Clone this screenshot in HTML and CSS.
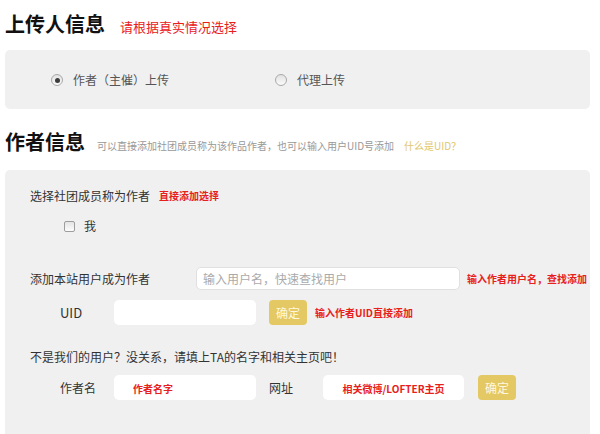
FILE: index.html
```html
<!DOCTYPE html>
<html lang="zh-CN">
<head>
<meta charset="utf-8">
<title>上传人信息</title>
<link rel="stylesheet" href="styles.css">
</head>
<body>
<div class="page">
  <div class="head head-first">
    <h2 class="title">上传人信息</h2>
    <span class="hint-red">请根据真实情况选择</span>
  </div>
  <div class="panel panel-radio">
    <label class="opt"><span class="radio checked"></span><span>作者（主催）上传</span></label>
    <label class="opt"><span class="radio"></span><span>代理上传</span></label>
  </div>

  <div class="head head-second">
    <h2 class="title">作者信息</h2>
    <span class="sub">可以直接添加社团成员称为该作品作者，也可以输入用户UID号添加</span>
    <span class="link">什么是UID？</span>
  </div>
  <div class="panel panel-author">
    <div class="row row-members">
      <span class="label">选择社团成员称为作者</span>
      <span class="note">直接添加选择</span>
    </div>
    <div class="row row-me">
      <span class="check"></span><span class="label">我</span>
    </div>
    <div class="row row-search">
      <span class="label label-wide">添加本站用户成为作者</span>
      <input class="field field-search" type="text" placeholder="输入用户名，快速查找用户">
      <span class="note note-search">输入作者用户名，查找添加</span>
    </div>
    <div class="row row-uid indent">
      <span class="label label-short label-uid">UID</span>
      <input class="field field-mid" type="text">
      <span class="btn">确定</span>
      <span class="note note-uid">输入作者UID直接添加</span>
    </div>
    <div class="row row-not">
      <span class="label">不是我们的用户？没关系，请填上TA的名字和相关主页吧！</span>
    </div>
    <div class="row row-name indent">
      <span class="label label-short">作者名</span>
      <input class="field field-mid field-red" type="text" placeholder="作者名字">
      <span class="label label-short label-url">网址</span>
      <input class="field field-url field-red field-center" type="text" placeholder="相关微博/LOFTER主页">
      <span class="btn btn-last">确定</span>
    </div>
  </div>
</div>
</body>
</html>
```

FILE: styles.css
```css
* { box-sizing: border-box; }
html, body { margin: 0; padding: 0; background: #fff; }
body {
  font-family: "Noto Sans CJK SC", "Microsoft YaHei", "Noto Sans", sans-serif;
  color: #333;
  font-size: 12px;
  overflow: hidden;
}
.page { padding-left: 5px; width: 590px; }

.head { display: flex; align-items: baseline; height: 24px; line-height: 24px; }
.head-first { margin-top: 12px; }
.head-second { margin-top: 21px; }
.title { margin: 0; font-size: 20px; font-weight: 700; color: #111; line-height: 24px; letter-spacing: 0; }
.hint-red { margin-left: 15px; font-size: 13px; color: #e8201c; }
.sub { margin-left: 12px; font-size: 10px; color: #999; }
.link { margin-left: 10px; font-size: 10px; color: #e2c66c; }

.panel { background: #f0f0f0; border-radius: 5px; }
.panel-radio {
  margin-top: 14px;
  height: 59px;
  padding: 20px 0 19px 46px;
  display: flex; align-items: center; gap: 106px;
  line-height: 20px;
}
.opt { display: flex; align-items: center; gap: 10px; color: #555; font-size: 12px; }
.radio {
  width: 12px; height: 12px; border-radius: 50%;
  border: 1px solid #a9a9a9;
  background: linear-gradient(#e2e2e2, #fbfbfb);
  display: flex; align-items: center; justify-content: center;
}
.radio.checked::after {
  content: ""; width: 5px; height: 5px; border-radius: 50%; background: #3c3c3c;
}

.panel-author {
  margin-top: 16px;
  height: 264px;
  padding: 16px 0 0 25px;
  border-radius: 5px 5px 0 0;
}
.row { display: flex; align-items: center; line-height: 20px; }
.label { color: #333; font-size: 12px; white-space: nowrap; }
.label-uid { font-size: 13px; }
.note { color: #e8201c; font-size: 10px; font-weight: 700; white-space: nowrap; }
.row-members .note { margin-left: 9px; }
.row-me { margin-top: 10px; padding-left: 34px; }
.check {
  width: 11px; height: 11px; border: 1px solid #9d9d9d; border-radius: 2px;
  background: linear-gradient(#e4e4e4, #fcfcfc); margin-right: 9px;
}
.row-search { margin-top: 31px; height: 23px; }
.label-wide { width: 166px; }
.indent { padding-left: 30px; }
.label-short { width: 54px; }
.field {
  font-family: inherit; font-size: 12px; color: #333;
  height: 25px; border: none; border-radius: 5px; background: #fff;
  outline: none; margin: 0; padding: 0 6px;
}
.field::placeholder { color: #aaa; }
.field-search { width: 264px; height: 23px; border: 1px solid #e0e0e0; }
.note-search { margin-left: 7px; }
.row-uid { margin-top: 10px; height: 25px; }
.field-mid { width: 142px; }
.btn {
  width: 38px; height: 25px; border-radius: 4px;
  background: #e4c863; color: #fff8df; font-size: 12px;
  display: flex; align-items: center; justify-content: center;
  margin-left: 13px;
}
.note-uid { margin-left: 8px; }
.row-not { margin-top: 22px; }
.row-name { margin-top: 8px; height: 25px; }
.label-url { margin-left: 13px; }
.field-url { width: 141px; }
.field-red { padding-left: 19px; }
.field-red::placeholder { color: #e8201c; font-size: 10px; font-weight: 700; }
.field-center { text-align: center; padding: 0; }
.btn-last { margin-left: 14px; }
```
